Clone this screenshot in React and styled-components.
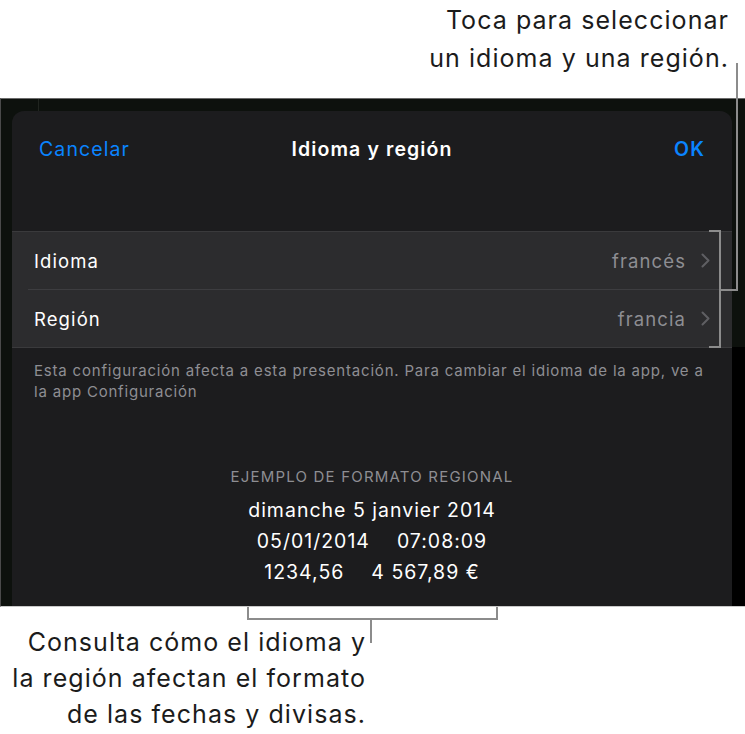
import React from 'react';
import styled, { createGlobalStyle } from 'styled-components';

const GlobalStyle = createGlobalStyle`
  body {
    margin: 0;
    background: #ffffff;
    font-family: Inter, "Liberation Sans", sans-serif;
    -webkit-font-smoothing: antialiased;
  }
`;

const rows = [
  { label: 'Idioma', value: 'francés' },
  { label: 'Región', value: 'francia' },
];

const samples = ['dimanche 5 janvier 2014', '05/01/2014\u2003 07:08:09', '1234,56\u2003 4 567,89 €'];

const Chevron = () => (
  <svg width="9" height="15" viewBox="0 0 9 15">
    <path d="M1.5 1.5l6 6-6 6" fill="none" stroke="#5f5f63" strokeWidth="2" strokeLinecap="round" strokeLinejoin="round" />
  </svg>
);

const App = () => {
  return (
    <Page>
      <GlobalStyle />
      <Callout>
        Toca para seleccionar
        <br />
        un idioma y una región.
      </Callout>
      <Screen>
        <Sheet>
          <NavBar>
            <NavButton>Cancelar</NavButton>
            <NavTitle>Idioma y región</NavTitle>
            <NavButton $bold $right>OK</NavButton>
          </NavBar>
          <Group>
            {rows.map((row, i) => (
              <React.Fragment key={row.label}>
                {i > 0 && <Separator />}
                <Row>
                  <RowLabel>{row.label}</RowLabel>
                  <RowValue>{row.value}</RowValue>
                  <Chevron />
                </Row>
              </React.Fragment>
            ))}
          </Group>
          <Note>
            Esta configuración afecta a esta presentación. Para cambiar el idioma de la app, ve a la app Configuración
          </Note>
          <Example>
            <ExampleHeading>EJEMPLO DE FORMATO REGIONAL</ExampleHeading>
            {samples.map((s) => (
              <ExampleLine key={s}>{s}</ExampleLine>
            ))}
          </Example>
        </Sheet>
        <Side />
      </Screen>
      <BottomArea>
        <BottomCallout>
          Consulta cómo el idioma y
          <br />
          la región afectan el formato
          <br />
          de las fechas y divisas.
        </BottomCallout>
      </BottomArea>
      <Leaders width="745" height="734" viewBox="0 0 745 734">
        <g fill="none" stroke="#8c8c8c" strokeWidth="2">
          <path d="M737 63V290H720" />
          <path d="M709 231H720V347H709" />
          <path d="M248 607V619H497V607" />
          <path d="M371 619V643" />
        </g>
      </Leaders>
    </Page>
  );
};

export default App;

const Page = styled.div`
  position: relative;
  width: 745px;
  height: 734px;
  overflow: hidden;
`;

const Callout = styled.div`
  height: 98px;
  box-sizing: border-box;
  padding: 1px 16px 0 0;
  text-align: right;
  font-size: 25px;
  line-height: 38px;
  color: #1b1b1b;
  letter-spacing: 1.05px;
`;

const Screen = styled.div`
  display: flex;
  height: 509px;
  box-sizing: border-box;
  border-top: 1px solid #6a6a6a;
  border-bottom: 1px solid #c9c9c9;
  border-left: 1px solid #4a4a4a;
  padding-left: 11px;
  background-color: #0d110d;
  background-image: linear-gradient(
    90deg,
    transparent 37px,
    #20241f 37px,
    #20241f 38px,
    transparent 38px
  );
`;

const Sheet = styled.div`
  width: 720px;
  margin-top: 12px;
  display: flex;
  flex-direction: column;
  background: #1c1c1e;
  border-radius: 12px 12px 0 0;
`;

const Side = styled.div`
  flex: 1;
  background: linear-gradient(#0d110d 0 248px, #000 248px);
`;

const NavBar = styled.div`
  display: grid;
  grid-template-columns: 1fr auto 1fr;
  align-items: center;
  height: 76px;
  padding: 0 27px 0 27px;
`;

const NavButton = styled.div`
  color: #0a84ff;
  font-size: 19.5px;
  letter-spacing: 1.1px;
  font-weight: ${(p) => (p.$bold ? 600 : 400)};
  justify-self: ${(p) => (p.$right ? 'end' : 'start')};
`;

const NavTitle = styled.div`
  color: #ffffff;
  font-size: 19.5px;
  letter-spacing: 1.1px;
  font-weight: 600;
`;

const Group = styled.div`
  margin-top: 44px;
  background: #2c2c2e;
  border-top: 1px solid #3a3a3c;
  border-bottom: 1px solid #3a3a3c;
`;

const Separator = styled.div`
  height: 1px;
  margin-left: 16px;
  background: #3d3d40;
`;

const Row = styled.div`
  display: flex;
  align-items: center;
  height: 57px;
  padding: 0 22px 0 22px;
  gap: 15px;
`;

const RowLabel = styled.div`
  flex: 1;
  color: #ffffff;
  font-size: 18.5px;
  letter-spacing: 1.1px;
`;

const RowValue = styled.div`
  color: #8e8e93;
  font-size: 18.5px;
  letter-spacing: 1.1px;
`;

const Note = styled.div`
  padding: 12px 12px 0 22px;
  color: #8e8e93;
  font-size: 15px;
  line-height: 21px;
  letter-spacing: 0.8px;
`;

const Example = styled.div`
  margin-top: 64px;
  display: flex;
  flex-direction: column;
  align-items: center;
`;

const ExampleHeading = styled.div`
  color: #8e8e93;
  font-size: 15px;
  line-height: 22px;
  letter-spacing: 1.2px;
  margin-bottom: 7px;
`;

const ExampleLine = styled.div`
  color: #ffffff;
  font-size: 19.5px;
  line-height: 31px;
  letter-spacing: 1px;
  white-space: pre;
`;

const BottomArea = styled.div`
  padding-top: 17px;
  width: 366px;
`;

const BottomCallout = styled.div`
  text-align: right;
  font-size: 25px;
  line-height: 36px;
  color: #1b1b1b;
  letter-spacing: 1.05px;
`;

const Leaders = styled.svg`
  position: absolute;
  top: 0;
  left: 0;
  pointer-events: none;
`;
